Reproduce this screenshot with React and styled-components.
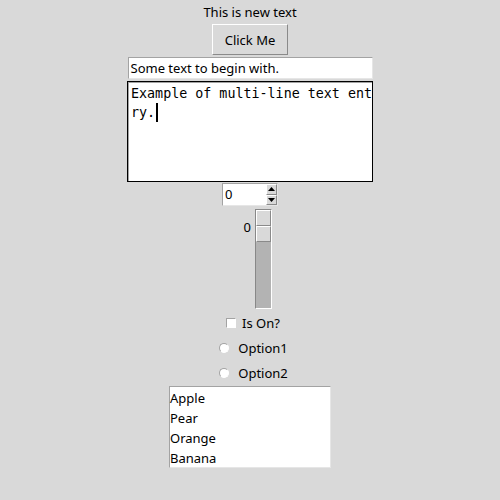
import React from 'react';
import styled, { createGlobalStyle } from 'styled-components';

const GlobalStyle = createGlobalStyle`
  html, body {
    margin: 0;
    padding: 0;
    background: #d9d9d9;
  }
  body {
    width: 500px;
    height: 500px;
    overflow: hidden;
    font-family: "Noto Sans", "DejaVu Sans", sans-serif;
    font-size: 13px;
    color: #000;
  }
`;

const Window = styled.div`
  display: flex;
  flex-direction: column;
  align-items: center;
  width: 500px;
  height: 500px;
  background: #d9d9d9;
`;

const Label = styled.div`
  height: 24px;
  line-height: 24px;
  white-space: nowrap;
`;

const Button = styled.div`
  box-sizing: border-box;
  width: 76px;
  height: 31px;
  display: flex;
  align-items: center;
  justify-content: center;
  background: #d9d9d9;
  border: 1px solid;
  border-color: #ffffff #8a8a8a #8a8a8a #ffffff;
`;

const Entry = styled.div`
  box-sizing: border-box;
  margin-top: 2px;
  width: 245px;
  height: 22px;
  background: #fff;
  border: 1px solid;
  border-color: #a3a3a3 #e6e6e6 #e6e6e6 #a3a3a3;
  padding: 0 2px;
  line-height: 20px;
  white-space: nowrap;
`;

const TextArea = styled.div`
  box-sizing: border-box;
  margin-top: 2px;
  width: 246px;
  height: 101px;
  background: #fff;
  border: 1px solid #000;
  box-shadow: inset 1px 1px 0 #a3a3a3;
  padding: 2px 3px;
  font-family: "DejaVu Sans Mono", "Liberation Mono", monospace;
  font-size: 13.35px;
  line-height: 19px;
`;

const Line = styled.div`
  white-space: pre;
  display: flex;
  align-items: center;
`;

const Cursor = styled.span`
  display: inline-block;
  width: 2px;
  height: 19px;
  background: #000;
  margin-left: 1px;
`;

const Spinbox = styled.div`
  box-sizing: border-box;
  margin-top: 1px;
  width: 56px;
  height: 23px;
  display: flex;
  background: #fff;
  border: 1px solid;
  border-color: #a3a3a3 #e6e6e6 #e6e6e6 #a3a3a3;
`;

const SpinValue = styled.div`
  flex: 1;
  padding-left: 2px;
  line-height: 21px;
`;

const SpinArrows = styled.div`
  width: 11px;
  display: flex;
  flex-direction: column;
`;

const Arrow = styled.div`
  box-sizing: border-box;
  flex: 1;
  display: flex;
  align-items: center;
  justify-content: center;
  background: #d9d9d9;
  border: 1px solid;
  border-color: #ffffff #8a8a8a #8a8a8a #ffffff;
`;

const Scale = styled.div`
  margin-top: 3px;
  display: flex;
  width: 44px;
  height: 100px;
`;

const ScaleValue = styled.div`
  width: 27px;
  box-sizing: border-box;
  padding-right: 4px;
  text-align: right;
  line-height: 16px;
  padding-top: 10px;
`;

const Trough = styled.div`
  box-sizing: border-box;
  width: 17px;
  height: 100px;
  background: #b3b3b3;
  border: 1px solid;
  border-color: #888888 #ffffff #ffffff #888888;
  display: flex;
  flex-direction: column;
`;

const SliderPart = styled.div`
  box-sizing: border-box;
  height: 16px;
  background: #d9d9d9;
  border: 1px solid;
  border-color: #ffffff #8a8a8a #8a8a8a #ffffff;
`;

const Check = styled.div`
  margin-top: 3px;
  margin-left: 6px;
  height: 22px;
  display: flex;
  align-items: center;
  gap: 6px;
`;

const Box = styled.span`
  box-sizing: border-box;
  width: 10px;
  height: 10px;
  background: #fff;
  border: 1px solid;
  border-color: #a3a3a3 #ffffff #ffffff #a3a3a3;
`;

const Radio = styled.div`
  margin-top: 3px;
  margin-left: 7px;
  height: 22px;
  display: flex;
  align-items: center;
  gap: 9px;
`;

const Dot = styled.span`
  box-sizing: border-box;
  width: 10px;
  height: 10px;
  border-radius: 50%;
  background: #fff;
  border: 1px solid;
  border-color: #a3a3a3 #ffffff #ffffff #a3a3a3;
`;

const Listbox = styled.div`
  box-sizing: border-box;
  margin-top: 2px;
  width: 162px;
  height: 82px;
  background: #fff;
  border: 1px solid;
  border-color: #a3a3a3 #e6e6e6 #e6e6e6 #a3a3a3;
  padding: 1px 0 0 0;
`;

const Item = styled.div`
  height: 20px;
  line-height: 20px;
`;

const Tri = ({ up }) => (
  <svg width="7" height="4" viewBox="0 0 7 4">
    <polygon points={up ? '0,4 7,4 3.5,0' : '0,0 7,0 3.5,4'} fill="#000" />
  </svg>
);

export default function App() {
  const fruits = ['Apple', 'Pear', 'Orange', 'Banana'];
  return (
    <Window>
      <GlobalStyle />
      <Label>This is new text</Label>
      <Button>Click Me</Button>
      <Entry>Some text to begin with.</Entry>
      <TextArea>
        <Line>Example of multi-line text ent</Line>
        <Line>ry.<Cursor /></Line>
      </TextArea>
      <Spinbox>
        <SpinValue>0</SpinValue>
        <SpinArrows>
          <Arrow><Tri up /></Arrow>
          <Arrow><Tri /></Arrow>
        </SpinArrows>
      </Spinbox>
      <Scale>
        <ScaleValue>0</ScaleValue>
        <Trough>
          <SliderPart />
          <SliderPart />
        </Trough>
      </Scale>
      <Check><Box />Is On?</Check>
      <Radio><Dot />Option1</Radio>
      <Radio><Dot />Option2</Radio>
      <Listbox>
        {fruits.map(f => <Item key={f}>{f}</Item>)}
      </Listbox>
    </Window>
  );
}
